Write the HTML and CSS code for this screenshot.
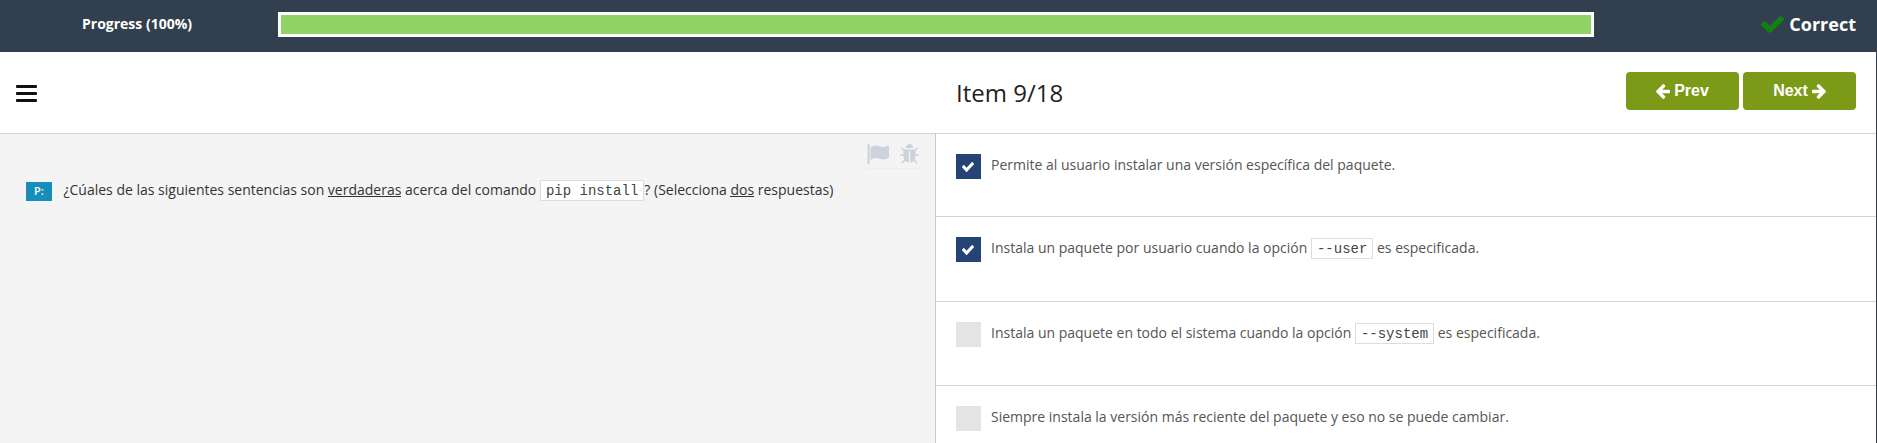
FILE: index.html
```html
<!DOCTYPE html>
<html lang="es">
<head>
<meta charset="utf-8">
<title>Item 9/18</title>
<link rel="stylesheet" href="styles.css">
</head>
<body>
<svg class="defs" aria-hidden="true">
  <symbol id="check" viewBox="121 334 1550 1188" preserveAspectRatio="none"><path d="M1671 566q0 40-28 68l-724 724-136 136q-28 28-68 28t-68-28l-136-136-362-362q-28-28-28-68t28-68l136-136q28-28 68-28t68 28l294 295 656-657q28-28 68-28t68 28l136 136q28 28 28 68z"/></symbol>
  <symbol id="arrow" viewBox="192 181 1472 1558"><path d="M1664 896v128q0 53-32.500 90.500t-84.500 37.500h-704l293 294q38 36 38 90t-38 90l-75 76q-37 37-90 37-52 0-91-37l-651-652q-37-37-37-90 0-52 37-91l651-650q38-38 91-38 52 0 90 38l75 74q38 38 38 91t-38 91l-293 293h704q52 0 84.500 37.500t32.500 90.500z"/></symbol>
</svg>
<div class="page">
  <header class="topbar">
    <div class="progress-label">Progress (100%)</div>
    <div class="progress"><div class="progress-fill"></div></div>
    <div class="result"><svg class="result-icon"><use href="#check"/></svg><span>Correct</span></div>
  </header>
  <nav class="toolbar">
    <div class="menu"><i></i><i></i><i></i></div>
    <h1 class="title">Item 9/18</h1>
    <div class="buttons">
      <button class="btn"><svg class="arrow"><use href="#arrow"/></svg><span>Prev</span></button>
      <button class="btn"><span>Next</span><svg class="arrow flip"><use href="#arrow"/></svg></button>
    </div>
  </nav>
  <main class="content">
    <section class="question">
      <div class="tools">
        <a class="tool tool-flag"><svg width="22" height="20" viewBox="0 0 22 20"><path d="M0.500 1.200a1.100 1.100 0 0 1 2.200 0V20H0.500z"/><path d="M3.500 3.200C6 2 7.500 1.400 9.500 1.400c3 0 4.300 1.500 6.800 1.500 1.800 0 3.500-.8 4.700-1.400.6-.3 1 0 1 .6v11c0 .5-.2.7-.6.9-1.500.8-3.200 1.500-5 1.500-2.700 0-4-1.600-7-1.600-2 0-4 .9-5.900 1.900z"/></svg></a>
        <a class="tool tool-bug"><svg width="19" height="20" viewBox="96 64 1600 1600" preserveAspectRatio="none"><path d="M1696 960q0 26-19 45t-45 19h-224q0 171-67 290l208 209q19 19 19 45t-19 45q-18 19-45 19t-45-19l-198-197q-5 5-15 13t-42 28.500-65 36.500-82 29-97 13v-896h-128v896q-51 0-101.500-13.500t-87-33-66-39-43.500-32.500l-15-14-183 207q-20 21-48 21-24 0-43-16-19-18-20.500-44.500t15.500-46.500l202-227q-58-114-58-274h-224q-26 0-45-19t-19-45 19-45 45-19h224v-294l-173-173q-19-19-19-45t19-45 45-19 45 19l173 173h844l173-173q19-19 45-19t45 19 19 45-19 45l-173 173v294h224q26 0 45 19t19 45zm-480-576h-640q0-133 93.500-226.500t226.500-93.500 226.500 93.500 93.500 226.500z"/></svg></a>
      </div>
      <div class="question-row">
        <span class="badge">P:</span>
        <p class="question-text">¿Cúales de las siguientes sentencias son <u>verdaderas</u> acerca del comando <code>pip install</code>? (Selecciona <u>dos</u> respuestas)</p>
      </div>
    </section>
    <section class="answers">
      <div class="answer"><span class="box checked"><svg class="tick"><use href="#check"/></svg></span><p>Permite al usuario instalar una versión específica del paquete.</p></div>
      <div class="answer tall"><span class="box checked"><svg class="tick"><use href="#check"/></svg></span><p>Instala un paquete por usuario cuando la opción <code>--user</code> es especificada.</p></div>
      <div class="answer"><span class="box"></span><p>Instala un paquete en todo el sistema cuando la opción <code>--system</code> es especificada.</p></div>
      <div class="answer"><span class="box"></span><p>Siempre instala la versión más reciente del paquete y eso no se puede cambiar.</p></div>
    </section>
  </main>
</div>
</body>
</html>
```
FILE: styles.css
```css
* { box-sizing: border-box; }
body {
  margin: 0;
  background: #313f4e;
  font-family: "Open Sans", sans-serif;
  font-size: 14px;
  overflow: hidden;
}
p, h1 { margin: 0; }
svg { display: block; fill: currentColor; }
.defs { display: none; }
.page {
  display: flex;
  flex-direction: column;
  height: 443px;
  margin-right: 1px;
  overflow: hidden;
  background: #fff;
}
.topbar {
  display: flex;
  flex: none;
  height: 52px;
  padding: 12px 20px 0 82px;
  background: #313f4e;
  color: #fff;
  font-weight: 700;
}
.progress-label { width: 196px; line-height: 24px; }
.progress {
  width: 1316px;
  height: 25px;
  padding: 3px;
  background: #fff;
}
.progress-fill { height: 100%; background: #90d468; }
.result {
  display: flex;
  gap: 5px;
  margin-left: auto;
  font-size: 18px;
  line-height: 25px;
}
.result-icon { width: 23px; height: 17px; margin-top: 4px; color: #128012; }
.toolbar {
  display: grid;
  grid-template-columns: 940px 1fr auto;
  flex: none;
  height: 82px;
  padding: 20px 20px 0 16px;
  border-bottom: 1px solid #d3d3d3;
}
.menu { display: flex; flex-direction: column; gap: 4px; padding-top: 13px; }
.menu i { width: 21px; height: 3px; border-radius: 1px; background: #111; }
.title { font-size: 24px; font-weight: 400; line-height: 42px; color: #222; }
.buttons { display: flex; gap: 4px; }
.btn {
  display: flex;
  align-items: center;
  justify-content: center;
  gap: 4px;
  width: 113px;
  height: 38px;
  padding: 0;
  border: 0;
  border-radius: 4px;
  background: #7b9a18;
  color: #fff;
  font: 700 16px "Liberation Sans", Arial, sans-serif;
}
.arrow { width: 14px; height: 15px; }
.flip { transform: scaleX(-1); }
.content { display: flex; flex: 1; min-height: 0; }
.question {
  width: 936px;
  border-right: 1px solid #cbcbcb;
  background: #f4f4f4;
  color: #333;
}
.tools {
  display: flex;
  justify-content: flex-end;
  height: 44px;
  padding: 10px 16px 0 0;
  color: #ccd3dd;
}
.tool { height: 25px; border-bottom: 1px dotted #e6e7e9; }
.tool-flag { padding-right: 11px; }
.question-row { display: flex; padding-left: 26px; }
.badge {
  width: 26px;
  height: 19px;
  margin: 4px 11.500px 0 0;
  background: #168dba;
  color: #fff;
  font-size: 11px;
  font-weight: 600;
  line-height: 18px;
  text-align: center;
}
.question-text { line-height: 24px; white-space: nowrap; }
u { text-decoration: none; box-shadow: inset 0 -1px #333; display: inline-block; line-height: 15px; }
code {
  display: inline-block;
  height: 21px;
  padding: 0 5px;
  border: 1px solid #ddd;
  background: #fff;
  color: #444;
  font: 14px/20px "Liberation Mono", "Courier New", monospace;
}
.answers { flex: 1; }
.answer {
  display: flex;
  gap: 10px;
  height: 84px;
  padding: 20px 20px 0;
  border-bottom: 1px solid #d3d3d3;
  color: #555;
}
.answer:first-child { height: 83px; }
.answer.tall { height: 85px; }
.answer p { line-height: 22px; white-space: nowrap; }
.box { width: 25px; height: 25px; background: #e4e4e4; }
.checked { padding: 8px 6px; background: #244476; color: #fff; }
.tick { width: 12px; height: 10px; }
```
